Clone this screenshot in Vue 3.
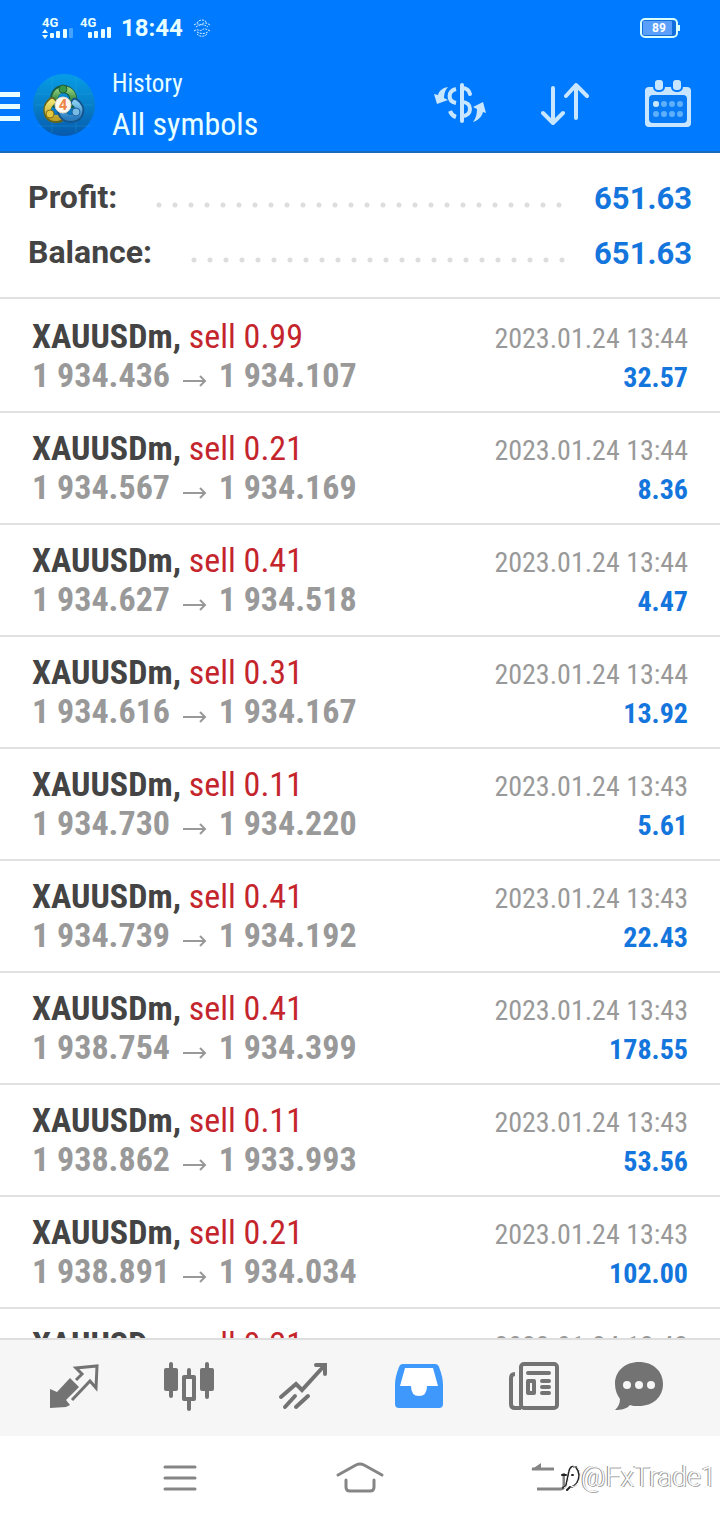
<script setup>
const rows = [
  ['0.99', '1 934.436', '1 934.107', '13:44', '32.57'],
  ['0.21', '1 934.567', '1 934.169', '13:44', '8.36'],
  ['0.41', '1 934.627', '1 934.518', '13:44', '4.47'],
  ['0.31', '1 934.616', '1 934.167', '13:44', '13.92'],
  ['0.11', '1 934.730', '1 934.220', '13:43', '5.61'],
  ['0.41', '1 934.739', '1 934.192', '13:43', '22.43'],
  ['0.41', '1 938.754', '1 934.399', '13:43', '178.55'],
  ['0.11', '1 938.862', '1 933.993', '13:43', '53.56'],
  ['0.21', '1 938.891', '1 934.034', '13:43', '102.00'],
  ['0.21', '', '', '13:43', '']
].map(([lots, open, close, time, profit]) => ({ lots, open, close, time, profit }))

const totals = [
  { label: 'Profit:', value: '651.63' },
  { label: 'Balance:', value: '651.63' }
]
const dots = [0, 1, 2, 3]
</script>

<template>
  <div class="screen">
    <header class="top">
      <div class="status">
        <svg class="signals" width="72" height="30" viewBox="0 -3 72 30" aria-hidden="true">
          <text x="0" y="11" class="net">4G</text>
          <text x="38" y="11" class="net">4G</text>
          <g fill="#e8ffff">
            <path d="M0 17l3-4 3 4zM0 19l3 4 3-4z" />
            <rect x="8" y="17" width="4" height="5" rx="1" />
            <rect x="14" y="15" width="4" height="7" rx="1" />
            <rect x="21" y="13" width="4" height="9" rx="1" />
            <rect x="27" y="12" width="4" height="10" rx="1" opacity=".3" />
            <rect x="46" y="16" width="4" height="6" rx="1" />
            <rect x="52" y="15" width="4" height="7" rx="1" />
            <rect x="59" y="13" width="4" height="9" rx="1" />
            <rect x="65" y="11" width="4" height="11" rx="1" />
          </g>
        </svg>
        <time class="clock">18:44</time>
        <svg class="busy" width="18" height="18" viewBox="0 0 18 18" fill="none" stroke="#d5f2ff" stroke-width="1" stroke-dasharray="2 1" aria-hidden="true">
          <path d="M4 4c2-4 8-4 10 0M1 6c4-3 6 1 8-1s5-1 8 1M3 8c4-3 8-3 12 0M1 12c4-3 6 1 8-1s5-1 8 1M4 13c3 2 8 2 11 0M4 15c2 3 8 3 10 0" />
        </svg>
        <svg class="battery" width="42" height="22" viewBox="0 0 42 22" role="img" aria-label="Battery 89%">
          <rect x="2" y="2" width="36" height="18" rx="4" fill="#116edb" stroke="#d8ffff" stroke-width="2" />
          <rect x="4" y="4" width="29" height="14" rx="1" fill="#5aa0fa" />
          <rect x="39" y="8" width="2" height="6" fill="#d8ffff" />
          <text x="20" y="15" text-anchor="middle" class="level">89</text>
        </svg>
      </div>
      <div class="bar">
        <button class="menu" aria-label="Menu"><i></i><i></i><i></i></button>
        <svg class="logo" width="64" height="64" viewBox="0 0 64 64" aria-hidden="true">
          <defs>
            <linearGradient id="disc" x2="0" y2="1"><stop stop-color="#079de7" /><stop offset=".5" stop-color="#087fc8" /><stop offset="1" stop-color="#0759ad" /></linearGradient>
            <linearGradient id="green" x2="0" y2="1"><stop stop-color="#8ccc78" /><stop offset="1" stop-color="#247b3d" /></linearGradient>
            <linearGradient id="gold" x2="0" y2="1"><stop stop-color="#eee06d" /><stop offset="1" stop-color="#bda02a" /></linearGradient>
            <linearGradient id="blue" x2="0" y2="1"><stop stop-color="#82c9ee" /><stop offset="1" stop-color="#2a7cc0" /></linearGradient>
          </defs>
          <circle cx="32" cy="32" r="31" fill="url(#disc)" />
          <path d="M20 4v56M44 4v56M4 21h56M3 32h58M5 53h54" stroke="#35b5e7" stroke-width="1" opacity=".25" />
          <g fill="none" stroke-width="6" stroke-linecap="round">
            <path d="M23 31c-3-9 2-15 8-15s13 6 9 15" stroke="#185d45" stroke-width="8" />
            <path d="M23 29c-3-16 21-17 18 0" stroke="url(#green)" />
            <path d="M20 28c-8 6-6 19 5 18 5 0 7-4 6-8" stroke="#606622" stroke-width="8" />
            <path d="M20 29c-8 7-4 17 5 16 5-1 6-4 5-8" stroke="url(#gold)" />
            <path d="M43 29c9 5 6 17-4 17-5 0-9-3-10-7" stroke="#15548b" stroke-width="8" />
            <path d="M43 30c8 6 4 15-4 15-5 0-8-3-9-7" stroke="url(#blue)" />
          </g>
          <circle cx="31" cy="16" r="4" fill="#37984b" stroke="#235e38" />
          <circle cx="18" cy="41" r="4" fill="#e5c840" stroke="#806e19" />
          <circle cx="44" cy="39" r="4" fill="#78bce6" stroke="#2164a1" />
          <circle cx="31" cy="32" r="8" fill="#fff8f0" stroke="#ddd9cb" />
          <text x="31" y="37" text-anchor="middle" class="four">4</text>
        </svg>
        <div class="title"><span>History</span><h1>All symbols</h1></div>
        <div class="actions">
          <button aria-label="Filter by symbol">
            <svg width="54" height="54" viewBox="0 0 54 54" fill="none" stroke="#c8e6ff" stroke-width="4" stroke-linecap="round">
              <path d="M29 9v36" />
              <path d="M37 18c-1-4-4-6-8-6M29 26c5 0 8 3 8 7s-3 7-8 7" />
              <path d="M23 13c-8 2-9 12 0 14M17 35c1 3 3 5 6 6" stroke-linecap="butt" />
              <path d="M15 11c-6 1-9 4-10 8l-4-1 3 10 11-4-4-2c0-4 1-8 4-11zM40 46c6-2 9-6 10-10l3 1-3-11-10 5 4 2c0 5-1 9-4 13z" fill="#c8e6ff" stroke="none" />
            </svg>
          </button>
          <button aria-label="Sort">
            <svg width="50" height="46" viewBox="0 0 50 46" fill="none" stroke="#c8e6ff" stroke-width="4" stroke-linecap="round" stroke-linejoin="round">
              <path d="M12 8v35M2 33l10 10 10-10M35 38V5M25 16L35 5l11 11" />
            </svg>
          </button>
          <button aria-label="Select period">
            <svg width="46" height="48" viewBox="0 0 46 48">
              <rect y="8" width="46" height="40" rx="4" fill="#c8e6ff" />
              <rect x="4" y="16" width="38" height="28" rx="4" fill="#087bf4" />
              <g fill="#c8e6ff" stroke="#007aff" stroke-width="2"><rect x="9" y="0" width="10" height="12" rx="4" /><rect x="27" y="0" width="10" height="12" rx="4" /></g>
              <g fill="#5eaffc"><template v-for="n in dots" :key="n"><circle :cx="11 + n * 8" cy="25" r="3" /><circle :cx="11 + n * 8" cy="35" r="3" /></template></g>
              <circle cx="11" cy="25" r="3" fill="#c8e6ff" />
            </svg>
          </button>
        </div>
      </div>
    </header>

    <dl class="totals">
      <div v-for="t in totals" :key="t.label" class="total">
        <dt>{{ t.label }}</dt><dd><span class="leader"></span>{{ t.value }}</dd>
      </div>
    </dl>

    <main class="list">
      <article v-for="(r, i) in rows" :key="i" class="deal">
        <div class="line">
          <span class="name"><b>XAUUSDm,</b> <span class="sell">sell {{ r.lots }}</span></span>
          <time>2023.01.24 {{ r.time }}</time>
        </div>
        <div v-if="r.open" class="line">
          <span class="prices">{{ r.open }}
            <svg width="24" height="14" viewBox="0 0 24 14" fill="none" stroke="#999" stroke-width="2" aria-label="to"><path d="M0 8h22M17 3l5 5-5 5" /></svg>
            {{ r.close }}</span>
          <b class="profit">{{ r.profit }}</b>
        </div>
      </article>
    </main>

    <nav class="tabs" aria-label="Sections">
      <button aria-label="Quotes">
        <svg width="52" height="52" viewBox="0 0 52 52" fill="none" stroke="#737373" stroke-width="3">
          <path d="M2 29l7 3L22 18l9 9-13 13 4 5-4 2-16 1z" fill="#737373" stroke="none" />
          <path d="M28 20l6-6-6-6 21-2-1 22-6-7-18 19" />
        </svg>
      </button>
      <button aria-label="Charts">
        <svg width="52" height="52" viewBox="0 0 52 52" fill="#737373">
          <rect x="1" y="8" width="14" height="23" rx="2" /><rect x="37" y="8" width="14" height="23" rx="2" />
          <path d="M8 4v32M26 10v8M26 39v10M44 4v33" stroke="#737373" stroke-width="4" stroke-linecap="round" />
          <rect x="21" y="17" width="10" height="22" fill="#f6f6f6" stroke="#737373" stroke-width="4" stroke-linejoin="round" />
        </svg>
      </button>
      <button aria-label="Trade">
        <svg width="52" height="52" viewBox="0 0 52 52" fill="none" stroke="#737373" stroke-width="4" stroke-linecap="round">
          <path d="M3 37l15-13 6 6L46 6M38 5h9v9M7 47l10-11M18 47l12-11" />
        </svg>
      </button>
      <button aria-label="History" aria-current="page">
        <svg width="52" height="52" viewBox="0 0 52 52">
          <path d="M10 4h32q3 0 4 3 4 10 4 18v19q0 4-4 4H6q-4 0-4-4V25Q2 17 6 7q1-3 4-3z" fill="#3f98fb" />
          <path d="M12 8h28l5 18H34q0 10-8 10t-8-10H7z" fill="#fff" />
        </svg>
      </button>
      <button aria-label="News">
        <svg width="52" height="52" viewBox="0 0 52 52" fill="none" stroke="#737373" stroke-width="4">
          <rect x="13" y="4" width="36" height="44" rx="3" /><path d="M7 14q-4 0-4 4v26q0 4 4 4h6" />
          <path d="M20 13h21M34 21h7M34 27h7M34 33h7" stroke-linecap="round" /><rect x="20" y="21" width="6" height="12" stroke-linejoin="round" />
        </svg>
      </button>
      <button class="chat" aria-label="Messages">
        <svg width="52" height="52" viewBox="0 0 52 52">
          <path d="M27 2c14 0 24 9 24 22S41 46 27 46c-4 0-7 0-9-1-3 4-9 5-15 5 3-3 5-6 5-11-3-4-5-9-5-15C3 11 13 2 27 2z" fill="#737373" />
          <g fill="#f6f6f6"><circle cx="15" cy="25" r="4" /><circle cx="27" cy="25" r="4" /><circle cx="39" cy="25" r="4" /></g>
        </svg>
      </button>
    </nav>

    <footer class="system">
      <button aria-label="Recent apps"><svg width="50" height="34" viewBox="0 0 50 34" fill="none" stroke="#858585" stroke-width="3" stroke-linecap="round"><path d="M10 6h30M10 17h30M10 28h30" /></svg></button>
      <button aria-label="Home"><svg width="50" height="34" viewBox="0 0 50 34" fill="none" stroke="#858585" stroke-width="3" stroke-linecap="round"><path d="M3 14l18-10q4-2 8 0l18 10M11 19v7q0 4 4 4h20q4 0 4-4v-7" /></svg></button>
      <button aria-label="Back"><svg width="50" height="34" viewBox="0 0 50 34" fill="none" stroke="#858585" stroke-width="3"><path d="M17 8H39M22 28h24q3 0 3-4V12" /><path d="M16 9l10-7v7z" fill="#858585" stroke="none" /></svg></button>
      <div class="mark">
        <svg width="22" height="28" viewBox="0 0 22 28" fill="none" stroke-linecap="round"><path d="M4 25l3-2 3-14q1-6 5-5M3 12h4M13 12h1M17 4q6 7 1 16-3 4-7 4l-3 3" stroke="#222" stroke-width="2" /><path d="M5 25l3-2 3-14q1-6 5-5M18 4q6 7 1 16-3 4-7 4" stroke="#fff" stroke-width="1" /></svg>
        <span>@FxTrade1</span>
      </div>
    </footer>
  </div>
</template>

<style>
body { margin: 0; background: #fff; }
</style>

<style scoped>
.screen {
  --narrow: "Roboto Condensed", "Liberation Sans Narrow", Roboto, sans-serif;
  height: 100vh;
  display: flex;
  flex-direction: column;
  overflow: hidden;
  background: #fff;
  color: #444;
  font-family: Roboto, sans-serif;
}
button { margin: 0; padding: 0; border: 0; background: none; display: flex; align-items: center; justify-content: center; }
svg { display: block; flex: none; }
.top { flex: none; background: #007aff; color: #e8ffff; border-bottom: 2px solid #176bbd; }
.status { height: 56px; display: flex; align-items: center; padding: 0 39px 0 42px; }
.net { font: 700 13px Roboto, sans-serif; fill: #e8ffff; }
.clock { margin-left: 7px; font-size: 24px; font-weight: 700; line-height: 28px; }
.busy { margin-left: 10px; }
.battery { margin-left: auto; }
.level { font: 700 12px Roboto, sans-serif; fill: #fff; }
.bar { height: 95px; box-sizing: border-box; display: flex; align-items: center; padding: 2px 29px 0 0; }
.menu { flex-direction: column; gap: 7px; width: 20px; align-items: stretch; padding-top: 4px; }
.menu i { height: 5px; background: #e8ffff; }
.logo { margin-left: 12px; }
.four { font: 700 15px Roboto, sans-serif; fill: #ed8546; }
.title { margin-left: 16px; padding-top: 2px; font-family: var(--narrow); }
.title span { display: block; font-size: 25px; line-height: 36px; }
.title h1 { margin: 0; font-size: 32px; line-height: 44px; font-weight: 400; }
.actions { margin-left: auto; padding-bottom: 4px; display: flex; align-items: center; gap: 54px; }
.totals { flex: none; margin: 0; padding: 17px 28px 17px; border-bottom: 2px solid #e1e1e1; }
.total { display: flex; align-items: baseline; height: 55px; line-height: 55px; font-size: 32px; font-weight: 700; }
.total dd { flex: 1; display: flex; align-items: center; margin: 0; color: #1476dd; font-size: 31px; }
.leader { flex: 1; height: 6px; margin: 14px 24px 0 34px; background: radial-gradient(circle, #ddd 2px, transparent 3px) 0 0 / 16px 6px; }
.list { flex: 1; min-height: 0; overflow: hidden; padding-top: 2px; font-family: var(--narrow); }
.deal { height: 112px; padding: 15px 32px 0; box-sizing: border-box; border-bottom: 2px solid #e1e1e1; }
.line { display: flex; justify-content: space-between; align-items: baseline; height: 39px; line-height: 40px; white-space: nowrap; }
.name, .prices { font-size: 34px; }
.sell { color: #c4242c; }
.prices { color: #999; font-weight: 700; }
.prices svg { display: inline-block; margin: 0 4px 0 5px; }
.line time { font-size: 28px; color: #999; }
.profit { font-size: 28px; color: #1476dd; }
.tabs { flex: none; height: 98px; box-sizing: border-box; display: grid; grid-template-columns: repeat(5, 115fr) 129fr; padding: 0 0 4px 16px; border-top: 2px solid #dedede; background: #f6f6f6; }
.chat { justify-content: flex-start; padding-left: 21px; }
.system { position: relative; flex: none; height: 84px; display: flex; justify-content: space-between; padding: 0 155px; }
.mark { position: absolute; right: 4px; top: 25px; display: flex; align-items: center; color: #fff; font-size: 27px; line-height: 32px; font-weight: 300; text-shadow: -1px 0 0 #888, 1px 1px 0 #aaa; }
</style>
